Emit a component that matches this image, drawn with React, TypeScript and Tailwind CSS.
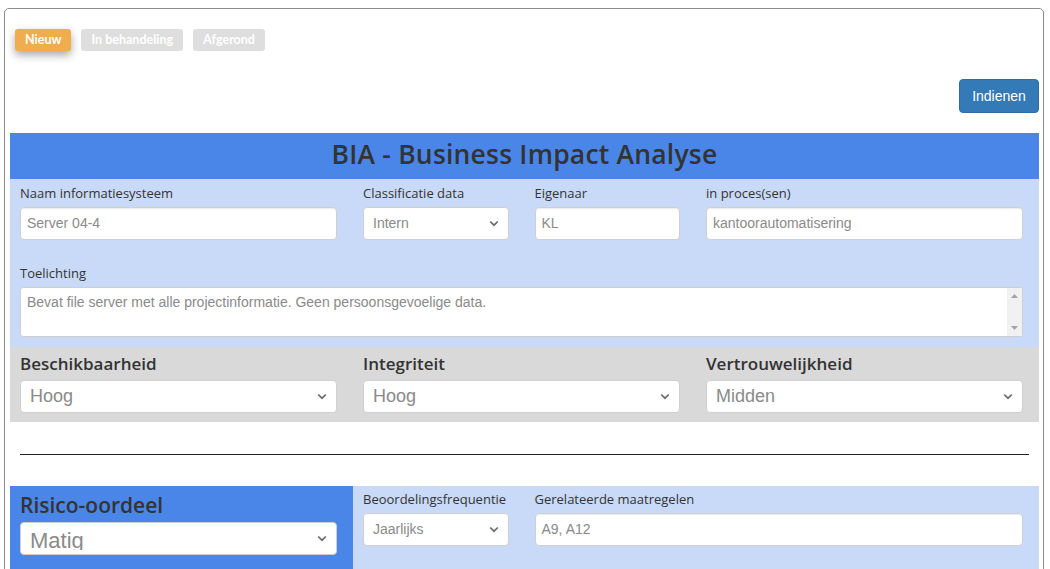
import React from "react";

const LABEL = "font-['Open_Sans','Noto_Sans',sans-serif] text-[13px] text-[#333]";
const ARIAL = "font-['Liberation_Sans',Arial,sans-serif]";

function Chevron() {
  return (
    <svg width="10" height="7" viewBox="0 0 10 7" className="shrink-0">
      <path d="M1.2 1.5 L5 5.2 L8.8 1.5" fill="none" stroke="#6b6b6b" strokeWidth="1.7" />
    </svg>
  );
}

function Input({ value }: { value: string }) {
  return (
    <div
      className={`h-[33px] bg-white border border-[#cfcfcf] rounded-[4px] shadow-[inset_0_1px_1px_rgba(0,0,0,0.075)] pl-[6px] flex items-center text-[14px] text-[#8a8a8a] ${ARIAL}`}
    >
      {value}
    </div>
  );
}

function Select({ value, size = "text-[14px]", h = "h-[33px]" }: { value: string; size?: string; h?: string }) {
  return (
    <div
      className={`${h} bg-white border border-[#cfcfcf] rounded-[4px] pl-[9px] pr-[9px] flex items-center justify-between ${size} text-[#8a8a8a] ${ARIAL}`}
    >
      <span>{value}</span>
      <Chevron />
    </div>
  );
}

function Field({ label, children }: { label: string; children: React.ReactNode }) {
  return (
    <div className="pl-[10px] pr-[16px]">
      <div className={`${LABEL} leading-[20px] mb-[4px]`}>{label}</div>
      {children}
    </div>
  );
}

function Heading({ label, value }: { label: string; value: string }) {
  return (
    <div className="pl-[10px] pr-[16px]">
      <div className="font-['Open_Sans','Noto_Sans',sans-serif] font-semibold text-[17px] text-[#333] leading-[22px] mb-[5px]">
        {label}
      </div>
      <Select value={value} size="text-[18px]" />
    </div>
  );
}

export default function App() {
  return (
    <div className="pt-2 pl-1 bg-white min-h-[569px] overflow-hidden">
      <div className="w-[1040px] h-[620px] border border-[#8c8c8c] rounded-t-[5px] pl-[5px] pr-[4px] pt-[20px]">
        {/* status */}
        <div className="flex gap-[10px] ml-[5px] font-['Lato',sans-serif] font-bold text-[12.5px] text-white">
          <div className="h-[22px] px-[10px] flex items-center rounded-[3px] bg-[#f0ad4e] shadow-[0_4px_8px_rgba(0,0,0,0.35)]">
            Nieuw
          </div>
          <div className="h-[22px] px-[10px] flex items-center rounded-[3px] bg-[#dedede]">In behandeling</div>
          <div className="h-[22px] px-[10px] flex items-center rounded-[3px] bg-[#dedede]">Afgerond</div>
        </div>

        <div className="flex justify-end mt-[28px]">
          <div
            className={`h-[34px] w-[80px] flex items-center justify-center rounded-[4px] bg-[#337ab7] border border-[#2e6da4] text-white text-[14px] ${ARIAL}`}
          >
            Indienen
          </div>
        </div>

        {/* header */}
        <div className="mt-[20px] h-[46px] bg-[#4a86e8] flex items-center justify-center pb-[3px]">
          <h1 className="font-['Open_Sans','Noto_Sans',sans-serif] font-semibold text-[26.5px] tracking-[0.2px] text-[#333] leading-none">
            BIA - Business Impact Analyse
          </h1>
        </div>

        {/* light blue */}
        <div className="bg-[#c9daf8] pt-[4px] pb-[10px]">
          <div className="grid grid-cols-6">
            <div className="col-span-2">
              <Field label="Naam informatiesysteem">
                <Input value="Server 04-4" />
              </Field>
            </div>
            <div className="col-span-1">
              <Field label="Classificatie data">
                <Select value="Intern" />
              </Field>
            </div>
            <div className="col-span-1">
              <Field label="Eigenaar">
                <Input value="KL" />
              </Field>
            </div>
            <div className="col-span-2">
              <Field label="in proces(sen)">
                <Input value="kantoorautomatisering" />
              </Field>
            </div>
          </div>
          <div className="mt-[23px]">
            <Field label="Toelichting">
              <div className="h-[50px] bg-white border border-[#cfcfcf] rounded-[3px] flex">
                <div className={`flex-1 pl-[6px] pt-[5px] text-[14px] leading-[18px] text-[#8a8a8a] ${ARIAL}`}>
                  Bevat file server met alle projectinformatie. Geen persoonsgevoelige data.
                </div>
                <div className="w-[15px] bg-[#f1f1f1] flex flex-col items-center justify-between py-[6px]">
                  <svg width="7" height="4" viewBox="0 0 7 4">
                    <path d="M0 4 L3.5 0 L7 4 Z" fill="#a3a3a3" />
                  </svg>
                  <svg width="7" height="4" viewBox="0 0 7 4">
                    <path d="M0 0 L7 0 L3.5 4 Z" fill="#a3a3a3" />
                  </svg>
                </div>
              </div>
            </Field>
          </div>
        </div>

        {/* gray */}
        <div className="bg-[#d9d9d9] pt-[6px] pb-[9px] grid grid-cols-3">
          <Heading label="Beschikbaarheid" value="Hoog" />
          <Heading label="Integriteit" value="Hoog" />
          <Heading label="Vertrouwelijkheid" value="Midden" />
        </div>

        <div className="h-[64px] flex items-center px-[10px]">
          <div className="h-px w-full bg-[#222]" />
        </div>

        {/* risk */}
        <div className="grid grid-cols-6 h-[100px]">
          <div className="col-span-2 bg-[#4a86e8] pl-[10px] pr-[16px] pt-[5px]">
            <div className="font-['Open_Sans','Noto_Sans',sans-serif] font-semibold text-[21px] text-[#333] leading-[28px] mb-[3px]">
              Risico-oordeel
            </div>
            <div className="h-[33px] bg-white border border-[#cfcfcf] rounded-[4px] pl-[9px] pr-[9px] flex items-start justify-between">
              <div className={`h-[27px] overflow-hidden text-[22px] leading-[36px] text-[#8a8a8a] ${ARIAL}`}>Matig</div>
              <div className="h-full flex items-center">
                <Chevron />
              </div>
            </div>
          </div>
          <div className="col-span-1 bg-[#c9daf8] pt-[3px]">
            <Field label="Beoordelingsfrequentie">
              <Select value="Jaarlijks" />
            </Field>
          </div>
          <div className="col-span-3 bg-[#c9daf8] pt-[3px]">
            <Field label="Gerelateerde maatregelen">
              <Input value="A9, A12" />
            </Field>
          </div>
        </div>
      </div>
    </div>
  );
}
